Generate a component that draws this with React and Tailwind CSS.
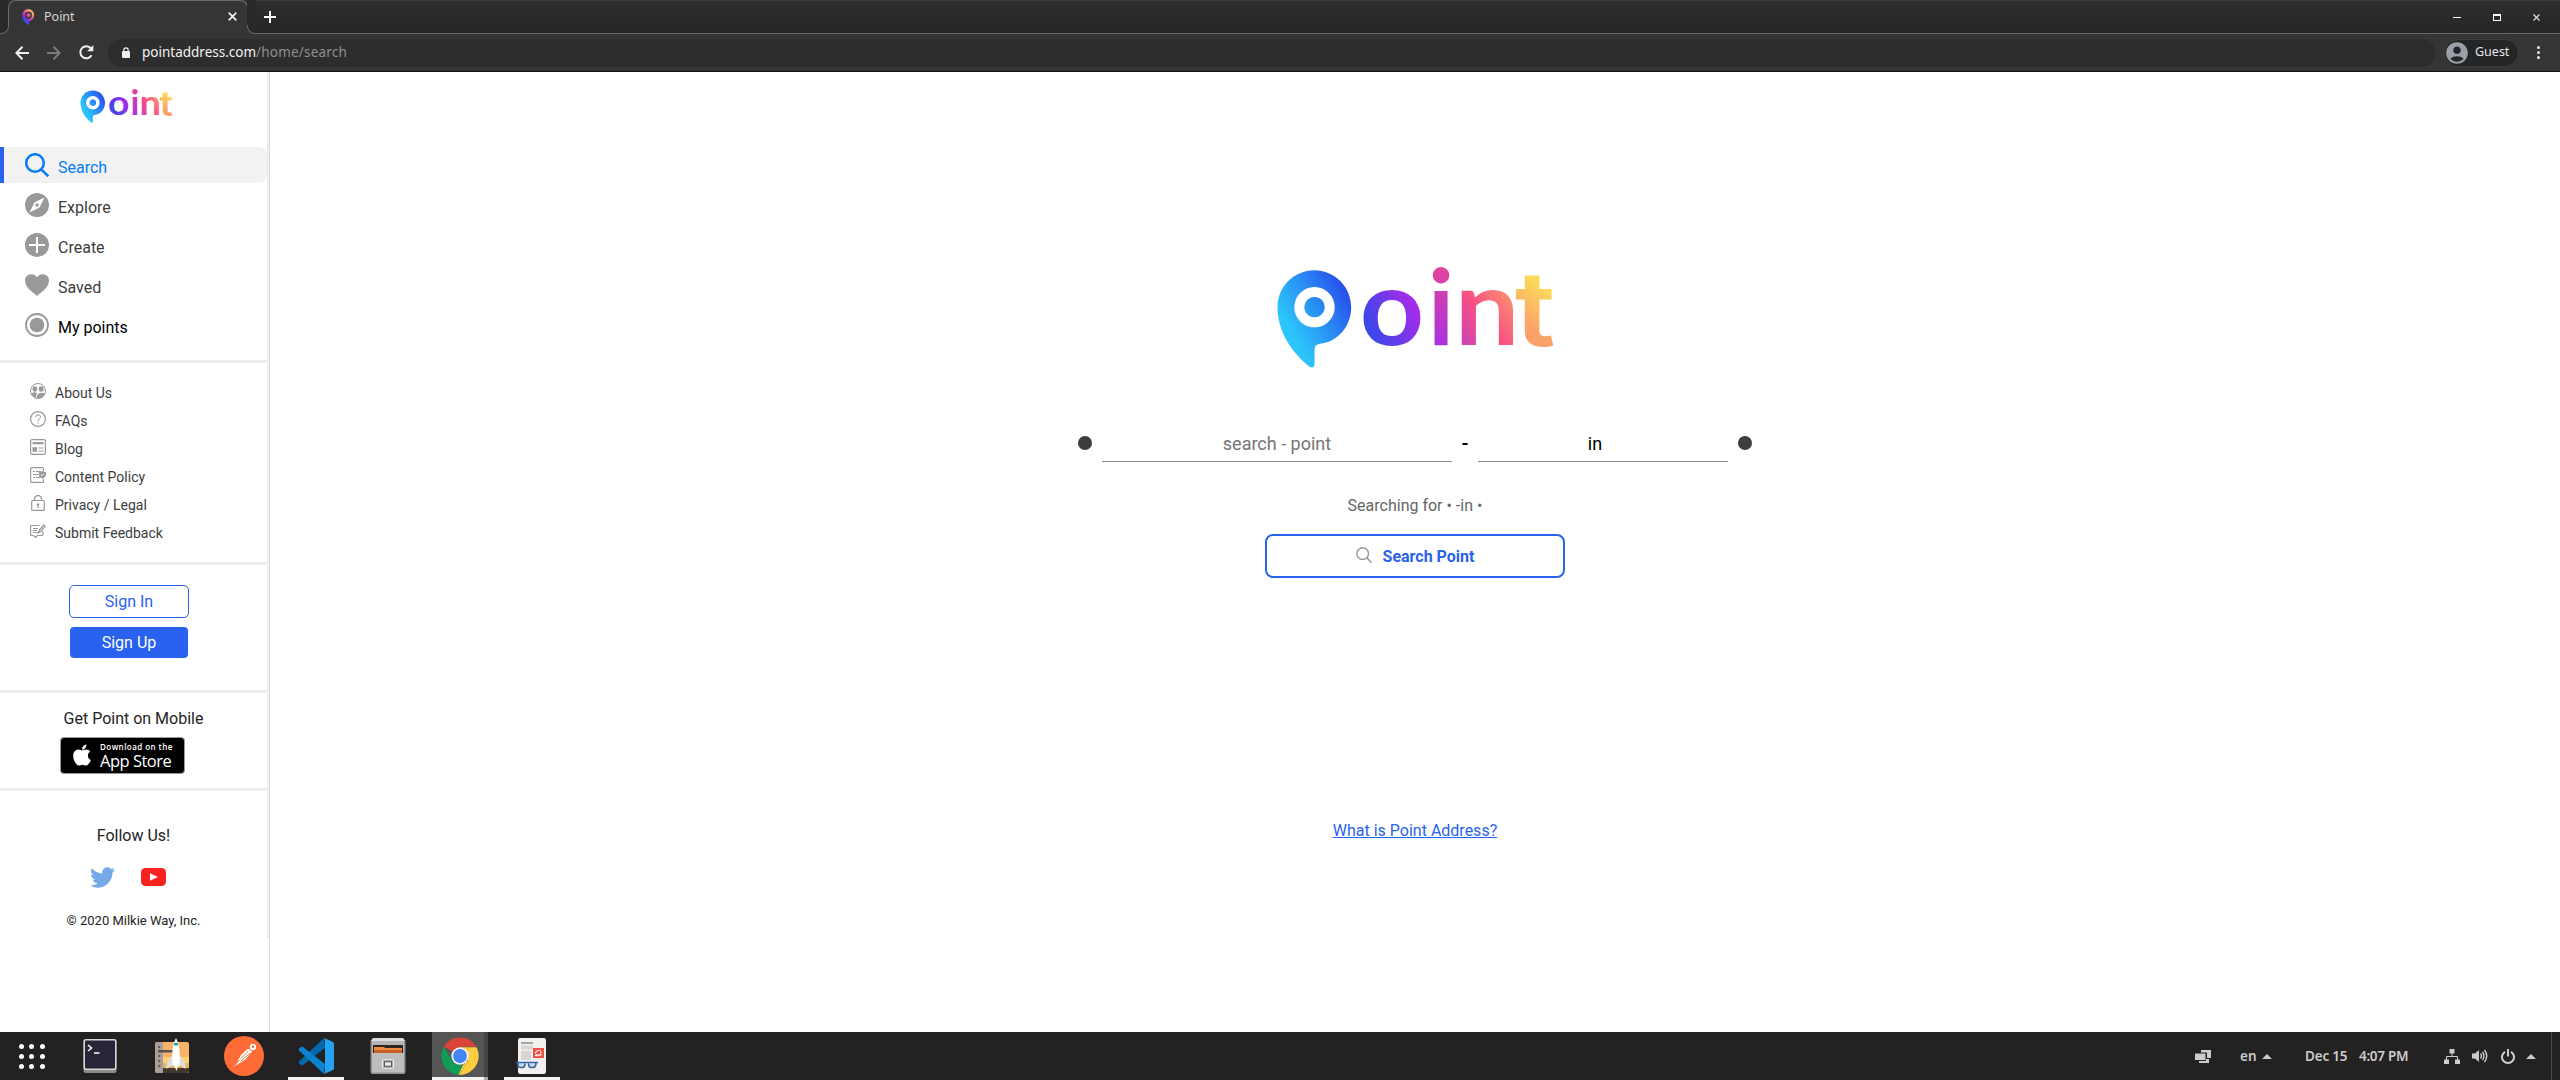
import React from "react";
import { FaTwitter, FaApple } from "react-icons/fa";
import { MdAccountCircle } from "react-icons/md";

/* ---------- Brand ---------- */

function PointLogo({ id, className }) {
  const g = (name) => `url(#${id}-${name})`;
  return (
    <svg viewBox="50 40 830 315" className={`overflow-visible ${className}`} role="img" aria-label="Point">
      <defs>
        <linearGradient id={`${id}-p`} gradientUnits="userSpaceOnUse" x1="85" y1="230" x2="262" y2="130">
          <stop offset="0" stopColor="#2cc4fa" />
          <stop offset="0.5" stopColor="#2a8df4" />
          <stop offset="1" stopColor="#2750ea" />
        </linearGradient>
        <linearGradient id={`${id}-o`} gradientUnits="userSpaceOnUse" x1="325" y1="240" x2="470" y2="170">
          <stop offset="0" stopColor="#3b47ea" />
          <stop offset="1" stopColor="#a92bea" />
        </linearGradient>
        <linearGradient id={`${id}-i`} gradientUnits="userSpaceOnUse" x1="530" y1="290" x2="555" y2="45">
          <stop offset="0" stopColor="#a631e2" />
          <stop offset="1" stopColor="#e5459a" />
        </linearGradient>
        <linearGradient id={`${id}-n`} gradientUnits="userSpaceOnUse" x1="600" y1="270" x2="750" y2="160">
          <stop offset="0" stopColor="#cf43b5" />
          <stop offset="0.5" stopColor="#f84f84" />
          <stop offset="1" stopColor="#fb8572" />
        </linearGradient>
        <linearGradient id={`${id}-t`} gradientUnits="userSpaceOnUse" x1="790" y1="220" x2="860" y2="120">
          <stop offset="0" stopColor="#fba26a" />
          <stop offset="1" stopColor="#fbd95a" />
        </linearGradient>
      </defs>
      <path
        fill={g("p")}
        fillRule="evenodd"
        d="M161.5 62C222.500 62 272 111.500 272 172.500C272 229 232 277 178 282Q162 284 162 300V344Q161 358 147 351C88 303 51 240 51 172.500C51 111.500 100.500 62 161.500 62ZM162 112a60.500 60.500 0 1 0 .01 0ZM162 142a30.500 30.500 0 1 1 -.01 0Z"
      />
      <g fontFamily="Lato, sans-serif" fontWeight="700" fontSize="314">
        <text x="298" y="285" textLength="193" lengthAdjust="spacingAndGlyphs" fill={g("o")}>o</text>
        <text x="542" y="287" textAnchor="middle" fill={g("i")}>i</text>
        <text x="583" y="287" textLength="194" lengthAdjust="spacingAndGlyphs" fill={g("n")}>n</text>
      </g>
      <text x="763" y="288" textLength="122" lengthAdjust="spacingAndGlyphs" fontFamily="Inter, sans-serif" fontWeight="600" fontSize="314" fill={g("t")}>t</text>
    </svg>
  );
}

function Favicon() {
  return (
    <svg viewBox="0 0 13 16" className="h-4 w-[13px]">
      <defs>
        <linearGradient id="fav" x1="0" y1="1" x2="0.7" y2="0">
          <stop offset="0" stopColor="#22c6f6" />
          <stop offset="0.35" stopColor="#4a35ee" />
          <stop offset="0.6" stopColor="#e23fa6" />
          <stop offset="1" stopColor="#ffc44d" />
        </linearGradient>
      </defs>
      <path fill="url(#fav)" d="M6.500 0A6.200 6.200 0 0 1 7 12.300V16C3 14 0 10 .2 6.200A6.200 6.200 0 0 1 6.500 0Z" />
      <circle cx="6.500" cy="6.200" r="2.700" fill="none" stroke="#353535" strokeWidth="1.500" />
    </svg>
  );
}

/* ---------- Browser chrome ---------- */

function Browser() {
  return (
    <header className="flex h-[72px] flex-col border-b border-[#121212] bg-[#353535] text-white">
      <div className="flex h-[34px]">
        <div className="flex w-[9px] flex-col">
          <div className="h-[25px] bg-[#282828]" />
          <div className="h-[9px] rounded-br-lg border-b border-r border-[#6a6a6a] bg-[#282828]" />
        </div>
        <div className="-ml-px w-[240px]">
          <div className="flex h-[26px] items-center rounded-t-lg border-x border-t border-[#6a6a6a] bg-[#353535] pl-[13px] pr-[10px] pt-[6px]">
            <Favicon />
            <span className="ml-[9px] flex-1 font-['Noto_Sans'] text-[12.500px] leading-4 text-[#d6d6d6]">Point</span>
            <svg viewBox="0 0 9 9" className="h-[9px] w-[9px]" stroke="#f0f0f0" strokeWidth="1.700">
              <path d="M.7.7l7.600 7.600M8.300.7L.7 8.300" />
            </svg>
          </div>
        </div>
        <div className="-ml-px flex w-[9px] flex-col">
          <div className="h-[25px] bg-[#282828]" />
          <div className="h-[9px] rounded-bl-lg border-b border-l border-[#6a6a6a] bg-[#282828]" />
        </div>
        <div className="flex flex-1 items-center border-b border-t border-b-[#6a6a6a] border-t-[#3a3a3a] bg-linear-to-b from-[#2e2e2e] to-[#252525] pl-2">
          <svg viewBox="0 0 12 12" className="h-3 w-3" stroke="#fff" strokeWidth="2">
            <path d="M6 0v12M0 6h12" />
          </svg>
          <div className="ml-auto flex w-[87px] items-center justify-between text-[#eee]">
            <span className="h-px w-2 bg-white" />
            <span className="h-[7px] w-2 border border-t-2 border-white" />
            <svg viewBox="0 0 7 7" className="h-[7px] w-[7px]" stroke="#ddd" strokeWidth="1.300">
              <path d="M.5.5l6 6M6.500.5l-6 6" />
            </svg>
          </div>
          <span className="w-5" />
        </div>
      </div>
      <div className="flex h-[37px] items-center pl-[15px]">
        <svg viewBox="0 0 14 14" className="h-[14px] w-[14px]" fill="none" stroke="#f1f1f1" strokeWidth="2">
          <path d="M14 7H1.500M7.500 .7L1.300 7l6.200 6.300" />
        </svg>
        <svg viewBox="0 0 14 14" className="ml-[18px] h-[14px] w-[14px]" fill="none" stroke="#7b7b7b" strokeWidth="2">
          <path d="M0 7h12.500M6.500 .7L12.700 7l-6.200 6.300" />
        </svg>
        <svg viewBox="0 0 15 15" className="ml-[18px] h-[15px] w-[15px]">
          <path d="M12.600 10.200A6 6 0 1 1 12 3.500" fill="none" stroke="#f1f1f1" strokeWidth="2" />
          <path d="M14.300 0v6.200H8.100Z" fill="#f1f1f1" />
        </svg>
        <div className="ml-[14px] flex h-7 flex-1 items-center rounded-full bg-[#2d2d2d] pl-[14px] font-['Noto_Sans'] text-[13.500px]">
          <svg viewBox="0 0 8 11" className="h-[11px] w-2" fill="#eee">
            <rect y="4" width="8" height="7" rx=".8" />
            <path d="M1.800 5V3a2.200 2.200 0 0 1 4.400 0v2" fill="none" stroke="#eee" strokeWidth="1.200" />
          </svg>
          <span className="ml-3 text-[#f3f3f3]">pointaddress.com</span>
          <span className="text-[#8f8f8f] tracking-[0.2px]">/home/search</span>
        </div>
        <div className="ml-[9px] flex h-7 w-[75px] items-center rounded-full border border-[#3f3f3f] bg-[#242527]">
          <MdAccountCircle className="-ml-px h-[26px] w-[26px] text-[#9ba0a8]" />
          <span className="ml-[5px] font-['Noto_Sans'] text-[12.500px] text-[#e8e8e8]">Guest</span>
        </div>
        <div className="ml-[18px] mr-5 flex flex-col gap-[2px]">
          <span className="h-[3px] w-[3px] rounded-full bg-[#eee]" />
          <span className="h-[3px] w-[3px] rounded-full bg-[#eee]" />
          <span className="h-[3px] w-[3px] rounded-full bg-[#eee]" />
        </div>
      </div>
    </header>
  );
}

/* ---------- Sidebar icons ---------- */

function SearchIcon({ className, width = 2.5 }) {
  return (
    <svg viewBox="0 0 24 24" className={className} fill="none" stroke="currentColor" strokeWidth={width}>
      <circle cx="10" cy="10" r="8.800" />
      <path d="M16.300 16.300l7 7" />
    </svg>
  );
}

const CompassIcon = () => (
  <svg viewBox="0 0 24 24" className="h-6 w-6">
    <circle cx="12" cy="12" r="12" fill="#999" />
    <path d="M19.500 4.500L14.500 14.500L4.500 19.500L9.500 9.500Z" fill="#fff" />
    <circle cx="12" cy="12" r="1.700" fill="#999" />
  </svg>
);

const PlusIcon = () => (
  <svg viewBox="0 0 24 24" className="h-6 w-6">
    <circle cx="12" cy="12" r="12" fill="#999" />
    <path d="M12 4v16M4 12h16" stroke="#fff" strokeWidth="2" />
  </svg>
);

const HeartIcon = () => (
  <svg viewBox="0 0 24 24" className="h-6 w-6">
    <path d="M12 23C9 20 0 15 0 7.500C0 .5 9-1 12 4.500C15-1 24 .5 24 7.500C24 15 15 20 12 23Z" fill="#999" />
  </svg>
);

const TargetIcon = () => (
  <svg viewBox="0 0 24 24" className="h-6 w-6">
    <circle cx="12" cy="12" r="11" fill="none" stroke="#999" strokeWidth="1.800" />
    <circle cx="12" cy="12" r="7.300" fill="#999" />
  </svg>
);

const small = { viewBox: "0 0 16 16", className: "h-4 w-4 shrink-0", fill: "none", stroke: "#999" };

const PeopleIcon = () => (
  <svg {...small}>
    <circle cx="8" cy="8" r="7.500" />
    <g fill="#999" stroke="none">
      <ellipse cx="4.800" cy="6" rx="2.300" ry="2.700" />
      <ellipse cx="11.200" cy="6" rx="2.500" ry="2.800" />
      <path d="M1.200 10.500Q4 8.500 7 10L5.500 14.800Q2.500 13.500 1.200 10.500ZM6.500 15Q7 10 11 9.700Q14 9.700 15 10.500Q12.500 16.500 6.500 15Z" />
    </g>
  </svg>
);

const HelpIcon = () => (
  <svg {...small}>
    <circle cx="8" cy="8" r="7.400" strokeWidth="1.200" />
    <path d="M5.500 6.200Q5.600 4 8 4Q10.500 4 10.500 6Q10.500 7.300 9 8.100Q8 8.700 8 10.200M8 11.500v1.300" />
  </svg>
);

const BlogIcon = () => (
  <svg {...small}>
    <rect x=".6" y=".6" width="14.800" height="14.800" rx="1.500" strokeWidth="1.200" />
    <path d="M2.500 4.200h11" strokeWidth="2.200" />
    <path d="M2.500 10.500h4.500" strokeWidth="4.500" />
    <path d="M8.500 9h5M8.500 12h5" />
  </svg>
);

const PolicyIcon = () => (
  <svg {...small}>
    <path strokeWidth="1.200" d="M13.500 4V1.500Q13.500.6 12.500.6H2Q.6.6.6 2v12Q.6 15.400 2 15.400h10.500Q13.500 15.400 13.500 14.500V12" />
    <path d="M3 4.500h2M6 4.500h4.500M3 7.500h5M3 10.500h2M6 10.500h4" />
    <path d="M12.300 4L16 5.200V8Q15.500 10.500 12.300 11.700Q9 10.500 8.800 8V5.200Z" fill="#999" stroke="none" />
    <path d="M10.800 7.800l1.200 1.200 2-2.500" stroke="#fff" strokeWidth=".8" />
  </svg>
);

const LockIcon = () => (
  <svg {...small}>
    <rect x="1.700" y="5.500" width="12.600" height="9.900" rx="1" strokeWidth="1.200" />
    <path d="M4.500 5.500V4Q4.600.6 8 .6T11.500 4v1.500M8 9v4" strokeWidth="1.300" />
    <circle cx="8" cy="9.500" r="1.300" fill="#999" stroke="none" />
  </svg>
);

const FeedbackIcon = () => (
  <svg {...small}>
    <path strokeWidth="1.200" d="M9.500 2.500H1.500Q.6 2.500.6 3.500v8Q.6 12.500 1.500 12.500h2l2 2 2-2h4.500Q13 12.500 13 11.500V8" />
    <path d="M3 5.500h5M3 7.500h4M3 9.500h6" />
    <path d="M8.500 9.500L9.200 7.300 13.700 2 15.200 3.300 10.600 8.600Z" strokeWidth="1.300" />
  </svg>
);

const nav = [
  { label: "Explore", Icon: CompassIcon, tone: "text-[#3d3d3d]" },
  { label: "Create", Icon: PlusIcon, tone: "text-[#3d3d3d]" },
  { label: "Saved", Icon: HeartIcon, tone: "text-[#3d3d3d]" },
  { label: "My points", Icon: TargetIcon, tone: "text-black" },
];

const links = [
  ["About Us", PeopleIcon],
  ["FAQs", HelpIcon],
  ["Blog", BlogIcon],
  ["Content Policy", PolicyIcon],
  ["Privacy / Legal", LockIcon],
  ["Submit Feedback", FeedbackIcon],
];

const Divider = () => <div className="h-[3px] shrink-0 bg-[#ededed]" />;

function Sidebar() {
  return (
    <aside className="w-[270px] shrink-0 border-r border-[#dcdcdc]">
      <div className="flex h-[866px] flex-col border-r-2 border-[#eee]">
        <PointLogo id="side" className="ml-20 mt-4 h-[35px] w-[93px]" />
        <nav className="mt-6 flex h-[213px] flex-col gap-1">
          <a className="flex h-9 items-center rounded-r-lg border-l-4 border-[#2962eb] bg-[#f2f2f2] pl-[21px] text-[#057cf7]">
            <SearchIcon className="h-6 w-6" />
            <span className="ml-[9px] pt-[6px]">Search</span>
          </a>
          {nav.map(({ label, Icon, tone }) => (
            <a key={label} className={`flex h-9 items-center pl-[25px] ${tone}`}>
              <Icon />
              <span className="ml-[9px] pt-[6px]">{label}</span>
            </a>
          ))}
        </nav>
        <Divider />
        <ul className="flex h-[199px] flex-col pl-[30px] pt-[14px] text-sm text-[#3d3d3d]">
          {links.map(([label, Icon]) => (
            <li key={label} className="flex h-7 items-center">
              <Icon />
              <span className="ml-[9px] pt-1">{label}</span>
            </li>
          ))}
        </ul>
        <Divider />
        <div className="flex h-[125px] flex-col pl-[69px] pt-5">
          <button className="h-[33px] w-[120px] rounded-[5px] border border-[#2962eb] text-[#2962eb]">Sign In</button>
          <button className="ml-px mt-[9px] h-[31px] w-[118px] rounded bg-[#2962ee] text-white">Sign Up</button>
        </div>
        <Divider />
        <div className="flex h-[95px] flex-col text-[#242424]">
          <p className="mt-[14px] text-center leading-6">Get Point on Mobile</p>
          <div className="ml-[60px] mt-[6px] flex h-[37px] w-[125px] items-center rounded border border-[#999] bg-black pl-[10px] text-white">
            <FaApple className="-mt-px h-6 w-[22px]" />
            <div className="ml-[7px] flex flex-col whitespace-nowrap font-['Open_Sans']">
              <span className="text-[8px] font-semibold leading-[11px] tracking-[0.45px]">Download on the</span>
              <span className="text-[16.500px] font-medium leading-[18px] tracking-[-0.5px]">App Store</span>
            </div>
          </div>
        </div>
        <Divider />
        <div className="flex flex-col items-center text-[#242424]">
          <p className="mt-[33px] leading-6">Follow Us!</p>
          <div className="mr-[12px] mt-[17px] flex h-6 items-center gap-[26px]">
            <FaTwitter className="h-[25px] w-[25px] text-[#75a9e8]" />
            <svg viewBox="0 0 25 18" className="h-[18px] w-[25px]">
              <rect width="25" height="18" rx="4.500" fill="#f8221e" />
              <path d="M9 5.300v7.400l8-3.700Z" fill="#fff" />
            </svg>
          </div>
          <p className="mt-[22px] text-[13px] leading-5">© 2020 Milkie Way, Inc.</p>
        </div>
      </div>
    </aside>
  );
}

/* ---------- Main ---------- */

function Main() {
  return (
    <main className="flex flex-1 flex-col items-center">
      <PointLogo id="main" className="mt-[191px] h-[105px] w-[277px]" />
      <div className="mt-[61px] flex h-[33px] items-center text-lg">
        <span className="mb-[5px] h-[14px] w-[14px] rounded-full bg-[#3d3d3d]" />
        <input
          className="ml-[10px] h-[33px] w-[350px] border-b border-[#8a8a8a] pb-[3px] text-center placeholder:text-[#757575]"
          placeholder="search - point"
        />
        <span className="w-[26px] pb-[4px] text-center font-bold text-black">-</span>
        <input className="mr-[10px] h-[33px] w-[250px] border-b border-[#8a8a8a] pb-[3px] pr-4 text-center text-black" defaultValue="in" />
        <span className="mb-[5px] h-[14px] w-[14px] rounded-full bg-[#3d3d3d]" />
      </div>
      <p className="mt-8 leading-6 text-[#666]">Searching for • -in •</p>
      <button className="mt-4 flex h-11 w-[300px] items-center justify-center rounded-lg border-2 border-[#2962eb] pt-px font-bold text-[#2962eb]">
        <SearchIcon className="mb-[3px] mr-[11px] h-4 w-4 text-[#999]" width={2.2} />
        Search Point
      </button>
      <a className="mt-[241px] leading-6 text-[#2962eb] underline">What is Point Address?</a>
    </main>
  );
}

/* ---------- Taskbar ---------- */

const GridIcon = () => (
  <span className="grid w-[26px] grid-cols-3 gap-[5px]">
    {Array.from({ length: 9 }, (_, i) => (
      <i key={i} className="h-[5px] w-[5px] rounded-full bg-white" />
    ))}
  </span>
);

const TerminalIcon = () => (
  <svg viewBox="0 0 34 34" className="h-[34px] w-[34px]">
    <rect x=".5" y="0" width="33" height="34" rx="2.500" fill="#8e8d8b" />
    <rect x=".5" y="0" width="33" height="31" rx="2.500" fill="#d8d7d5" />
    <rect x="2" y="1.500" width="30" height="28" rx="1" fill="#2a2438" />
    <path d="M5 6l3.500 3L5 12M11 14h5.500" fill="none" stroke="#fff" strokeWidth="1.500" />
  </svg>
);

const RocketIcon = () => (
  <svg viewBox="0 0 34 36" className="h-9 w-[34px]">
    <rect x="0" y="4" width="34" height="31" rx="2" fill="#f9b368" />
    <path d="M8 19h26v6H8z" fill="#fbd374" />
    <path d="M8 25h26v5H8z" fill="#e6b857" />
    <path d="M8 30h26v3.500L32 35H8z" fill="#43382f" />
    <path d="M2 4h6v31H2Q0 35 0 33V6Q0 4 2 4Z" fill="#a89e9a" />
    <path d="M3 12h15v2.500H3z" fill="#5b524f" />
    <circle cx="4.200" cy="9" r="1.200" fill="#665d5a" />
    <circle cx="4.200" cy="18" r="1.200" fill="#665d5a" />
    <circle cx="4.200" cy="23" r="1.200" fill="#665d5a" />
    <circle cx="4.200" cy="28" r="1.200" fill="#665d5a" />
    <path d="M17 18L12 25L11 31L16 28H26L31 31L30 25L25 18Z" fill="#dedede" />
    <path d="M21 0Q26 8 24.500 27H17.500Q16 8 21 0Z" fill="#fff" />
    <path d="M19 5q2-1.200 4 0v2.500h-4z" fill="#299fc2" />
    <path d="M19 27h4.500l-2 6z" fill="#fff" />
  </svg>
);

const PostmanIcon = () => (
  <svg viewBox="0 0 40 40" className="h-10 w-10">
    <circle cx="20" cy="20" r="20" fill="#ff6c37" />
    <path d="M24 12.500L28 15.500L22 23L15 27.500L9 31L13 26.500L17 19Z" fill="#fff" />
    <path d="M24.500 15l-8 8M26 17l-9 8M15.500 24l-5 6" stroke="#c65a34" strokeWidth=".8" fill="none" />
    <circle cx="29" cy="11" r="3.200" fill="#fff" />
    <circle cx="29" cy="10.800" r="1.300" fill="#ff6c37" />
  </svg>
);

const CodeIcon = () => (
  <svg viewBox="0 0 36 36" className="h-9 w-9">
    <path d="M26 0L1 23.500Q0 24.500 1 25.500L3 27Q4 27.500 5 27L27 10Z" fill="#0069ac" />
    <path d="M26 36L1 12.500Q0 11.500 1 10.500L3 9Q4 8.500 5 9L27 26Z" fill="#0a84cf" />
    <path d="M26 0L35 4Q36 4.500 36 5.500V30.500Q36 31.500 35 32L26 36Q27 35 27 33V3Q27 1 26 0Z" fill="#25a2f0" />
  </svg>
);

const FilesIcon = () => (
  <svg viewBox="0 0 36 36" className="h-9 w-9">
    <path d="M3 0H33L35.500 3V34Q35.500 36 33.500 36H2.500Q.5 36 .5 34V3Z" fill="#8f8f8f" />
    <path d="M3 0H33L35 3H1Z" fill="#dcdcdc" />
    <path d="M2 3H34V15H2Z" fill="#b5b5b5" />
    <path d="M3 7H33V15H3Z" fill="#2f2421" />
    <path d="M4 9H14L15 10H32V15H4Z" fill="#f08a3c" />
    <path d="M4 12H32V15H4Z" fill="#c9602a" />
    <path d="M2 15H34V34.500H2Z" fill="#bdbdbd" />
    <rect x="12.500" y="21.500" width="11" height="9" rx="1.500" fill="#a9a9a9" stroke="#e4e4e4" />
    <rect x="14.500" y="23.800" width="7" height="4.400" fill="#e8e8e8" stroke="#555" />
  </svg>
);

const ChromeIcon = () => (
  <svg viewBox="0 0 38 38" className="h-[38px] w-[38px]">
    <path d="M19 19L2.900 9.600A18.700 18.700 0 0 1 35.200 9.700L19 9.700Z" fill="#db4437" />
    <path d="M19 10.300H35.500A18.700 18.700 0 0 1 18.600 37.700L27 23.600Z" fill="#ffcd40" />
    <path d="M2.900 9.600L11 23.600Q14 29 22 28L17.500 37.700A18.700 18.700 0 0 1 2.900 9.600Z" fill="#0f9d58" />
    <path d="M22 28L27 23.600L18.600 37.700H17.500Z" fill="#ffcd40" />
    <circle cx="19" cy="19" r="8.700" fill="#f1f1f1" />
    <circle cx="19" cy="19" r="6.900" fill="#4285f4" />
  </svg>
);

const ReaderIcon = () => (
  <svg viewBox="0 0 30 36" className="mr-[2px] h-9 w-[30px]">
    <rect x="2" y="0" width="28" height="36" rx="2" fill="#f3f1ef" />
    <path d="M5 5h12" stroke="#888" strokeWidth="1.500" />
    <path d="M5 7.500h12v4H5zM5 13h10v9H5z" fill="#d9d6d2" />
    <path d="M17 10h11v10H17z" fill="#ef5146" />
    <path d="M19 17.500q6 1 6-2.500t-3-2.500-2.500 3 6 1.500" fill="none" stroke="#fff" strokeWidth="1" />
    <path d="M0 24.500h22M2 24.500v3q0 2 2.500 2h2q2.500 0 2.500-4M12.500 25.500q0 4 2.500 4h2q3 0 3-4.500" fill="#c8d5e3" stroke="#3465a4" strokeWidth="1.600" />
  </svg>
);

const apps = [
  { Icon: TerminalIcon, bar: "bg-transparent", cell: "" },
  { Icon: RocketIcon, bar: "bg-transparent", cell: "" },
  { Icon: PostmanIcon, bar: "bg-transparent", cell: "" },
  { Icon: CodeIcon, bar: "bg-[#f5f2f2]", cell: "" },
  { Icon: FilesIcon, bar: "bg-transparent", cell: "" },
  {
    Icon: ChromeIcon,
    bar: "bg-linear-to-r from-[#f5f2f2] from-[92%] to-[#aaa] to-[92%]",
    cell: "bg-linear-to-r from-[#555] from-[92%] to-[#444] to-[92%]",
  },
  { Icon: ReaderIcon, bar: "bg-[#f5f2f2]", cell: "" },
];

const Caret = () => (
  <svg viewBox="0 0 10 5" className="h-[5px] w-[10px]" fill="#ccc">
    <path d="M5 0l5 5H0Z" />
  </svg>
);

function Taskbar() {
  return (
    <footer className="flex h-12 bg-[#232122] font-['Noto_Sans'] text-[#ccc]">
      <div className="flex w-16 items-center justify-center">
        <GridIcon />
      </div>
      <div className="ml-2 flex gap-4">
        {apps.map(({ Icon, bar, cell }, i) => (
          <div key={i} className={`flex w-14 flex-col items-center ${cell}`}>
            <div className="flex h-[45px] items-center pt-[3px]">
              <Icon />
            </div>
            <div className={`h-[3px] w-full ${bar}`} />
          </div>
        ))}
      </div>
      <div className="ml-auto flex items-center text-[13.500px] font-semibold">
        <svg viewBox="0 0 16 13" className="h-[13px] w-4" fill="#ccc">
          <path d="M6 0h10v8h-4V2.500H6zM0 3.500h10.500v6.500H0zM4 11h7V9h3v4H4z" />
        </svg>
        <span className="ml-[29px] w-[17px]">en</span>
        <span className="ml-[5px]"><Caret /></span>
        <span className="ml-[33px] w-[44px] whitespace-nowrap tracking-[-0.2px]">Dec 15</span>
        <span className="ml-[10px] w-[50px] whitespace-nowrap tracking-[-0.3px]">4:07 PM</span>
        <svg viewBox="0 0 16 15" className="ml-[35px] h-[15px] w-4" fill="#ccc">
          <path d="M5.500 0h5v4.500h-5zM0 10.500h5V15H0zM11 10.500h5V15h-5z" />
          <path d="M8 4v3.500M2.500 11V7.500h11V11" fill="none" stroke="#ccc" />
        </svg>
        <svg viewBox="0 0 16 14" className="ml-3 h-[14px] w-4" fill="none" stroke="#ccc" strokeWidth="1.400">
          <path d="M0 4.500h3L7 1v12L3 9.500H0z" fill="#ccc" stroke="none" />
          <path d="M8.500 4.500q2 2.500 0 5M10.500 2.800q3 4.200 0 8.400M12.500 1q4.500 6 0 12" />
        </svg>
        <svg viewBox="0 0 14 15" className="ml-[13px] h-[15px] w-[14px]" fill="none" stroke="#ccc" strokeWidth="2">
          <path d="M4 2.800A6 6 0 1 0 10 2.800M7 0v7.500" />
        </svg>
        <span className="ml-[11px]"><Caret /></span>
        <span className="ml-[15px] mr-2 h-12 w-px bg-[#484848]" />
      </div>
    </footer>
  );
}

export default function App() {
  return (
    <div className="flex h-[1080px] w-[2560px] flex-col overflow-hidden bg-white font-[Roboto,sans-serif]">
      <Browser />
      <div className="flex h-[960px] text-base">
        <Sidebar />
        <Main />
      </div>
      <Taskbar />
    </div>
  );
}
